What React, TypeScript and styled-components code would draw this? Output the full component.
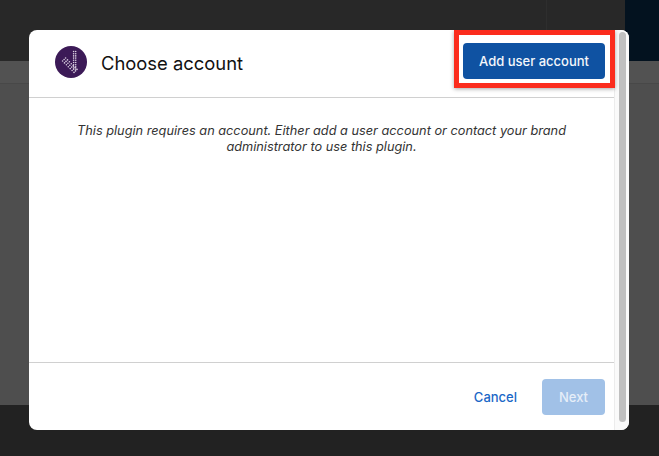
import styled, { createGlobalStyle } from 'styled-components'

const GlobalStyle = createGlobalStyle`
    html, body {
        margin: 0;
        padding: 0;
        height: 100%;
        overflow: hidden;
        background: #222;
        font-family: Inter, 'Liberation Sans', sans-serif;
    }
    #root {
        height: 100%;
    }
`

const Page = styled.div`
    position: relative;
    width: 659px;
    height: 456px;
    display: flex;
    flex-direction: column;
    overflow: hidden;
`

const TopBar = styled.div`
    height: 61px;
    flex: none;
    display: flex;
    justify-content: flex-end;
    background: #282828;
`

const TopBarSection = styled.div`
    width: 78px;
    border-left: 1px solid #2e2e2e;
`

const TopBarAccent = styled.div`
    width: 34px;
    background: #03121f;
`

const SubBar = styled.div`
    height: 23px;
    flex: none;
    background: #525252;
    border-bottom: 1px solid #484848;
    box-sizing: border-box;
`

const Content = styled.div`
    flex: 1;
    background: #4e4e4e;
`

const BottomBar = styled.div`
    height: 51px;
    flex: none;
    background: #222;
`

const Backdrop = styled.div`
    position: absolute;
    inset: 0;
    display: flex;
    padding: 30px 30px 26px 29px;
    box-sizing: border-box;
`

const Modal = styled.div`
    flex: 1;
    display: flex;
    background: #fff;
    border-radius: 8px;
    overflow: hidden;
`

const ModalMain = styled.div`
    flex: 1;
    display: flex;
    flex-direction: column;
    min-width: 0;
`

const ModalHeader = styled.header`
    position: relative;
    z-index: 1;
    height: 68px;
    flex: none;
    display: flex;
    align-items: center;
    justify-content: space-between;
    padding: 0 9px 3px 26px;
    border-bottom: 1px solid #d0d0d0;
    box-sizing: border-box;
`

const TitleGroup = styled.div`
    display: flex;
    align-items: center;
    gap: 14px;
`

const Logo = styled.svg`
    width: 32px;
    height: 32px;
    display: block;
`

const Title = styled.h1`
    margin: 0;
    padding-top: 2px;
    font-size: 18.4px;
    font-weight: 400;
    line-height: 24px;
    color: #111;
`

const ModalBody = styled.div`
    flex: 1;
    padding: 25px 20px 0;
`

const Message = styled.p`
    margin: 0;
    font-size: 12.76px;
    font-style: italic;
    line-height: 15.5px;
    text-align: center;
    color: #333;
`

const ModalFooter = styled.footer`
    height: 68px;
    flex: none;
    display: flex;
    align-items: center;
    justify-content: flex-end;
    gap: 25px;
    padding: 1px 9px 0 0;
    border-top: 1px solid #d0d0d0;
    box-sizing: border-box;
`

const Highlight = styled.div`
    padding: 8px 0 0 4px;
    margin-right: -10px;
    border: 5px solid #fb2c1d;
    box-sizing: border-box;
    box-shadow: 0 1px 4px rgba(0, 0, 0, 0.35);
    width: 161px;
    height: 58px;
    display: flex;
    align-items: flex-start;
    align-self: flex-start;
`

const Button = styled.button<{ $disabled?: boolean }>`
    height: 36px;
    width: ${({ $disabled }) => ($disabled ? '63px' : '142px')};
    flex: none;
    padding: 0;
    border: none;
    border-radius: 4px;
    font-family: inherit;
    font-size: 13px;
    font-weight: 500;
    color: ${({ $disabled }) => ($disabled ? '#e6eef8' : '#f4f7fb')};
    background: ${({ $disabled }) => ($disabled ? '#a1c1e7' : '#0f52a2')};
`

const LinkButton = styled.button`
    padding: 0 0 0 1px;
    border: none;
    background: none;
    font-family: inherit;
    font-size: 13px;
    font-weight: 500;
    color: #1a67c7;
`

const ScrollTrack = styled.div`
    width: 15px;
    flex: none;
    padding: 2px 3px 8px 4px;
    background: #fafafa;
    border-left: 1px solid #ececec;
    box-sizing: border-box;
    display: flex;
`

const ScrollThumb = styled.div`
    flex: 1;
    border-radius: 4px;
    background: #c0c0c0;
`

// dotted check mark of the plugin logo
const logoDots = (() => {
    const dots: [number, number][] = []
    // upright arm, from the top of the logo down to the point
    for (let row = 0; row < 9; row++) {
        for (let col = 0; col < 2; col++) {
            dots.push([18.6 + col * 2.1, 5.5 + row * 2.2])
        }
    }
    // short arm, from the left down to the point
    for (let step = 0; step < 7; step++) {
        for (let col = 0; col < 3; col++) {
            dots.push([7.6 + step * 1.9 + col * 1.5, 15 + step * 1.9 - col * 1.5])
        }
    }
    return dots
})()

const App = () => {
    return (
        <Page>
            <GlobalStyle />
            <TopBar>
                <TopBarSection />
                <TopBarAccent />
            </TopBar>
            <SubBar />
            <Content />
            <BottomBar />
            <Backdrop>
                <Modal>
                    <ModalMain>
                        <ModalHeader>
                            <TitleGroup>
                                <Logo viewBox="0 0 32 32">
                                    <circle cx="16" cy="16" r="16" fill="#3c1a57" />
                                    {logoDots.map(([cx, cy], i) => (
                                        <circle key={i} cx={cx} cy={cy} r="0.8" fill="#d9cfe0" />
                                    ))}
                                </Logo>
                                <Title>Choose account</Title>
                            </TitleGroup>
                            <Highlight>
                                <Button>Add user account</Button>
                            </Highlight>
                        </ModalHeader>
                        <ModalBody>
                            <Message>
                                This plugin requires an account. Either add a user account or contact your brand
                                administrator to use this plugin.
                            </Message>
                        </ModalBody>
                        <ModalFooter>
                            <LinkButton>Cancel</LinkButton>
                            <Button $disabled>Next</Button>
                        </ModalFooter>
                    </ModalMain>
                    <ScrollTrack>
                        <ScrollThumb />
                    </ScrollTrack>
                </Modal>
            </Backdrop>
        </Page>
    )
}

export default App
